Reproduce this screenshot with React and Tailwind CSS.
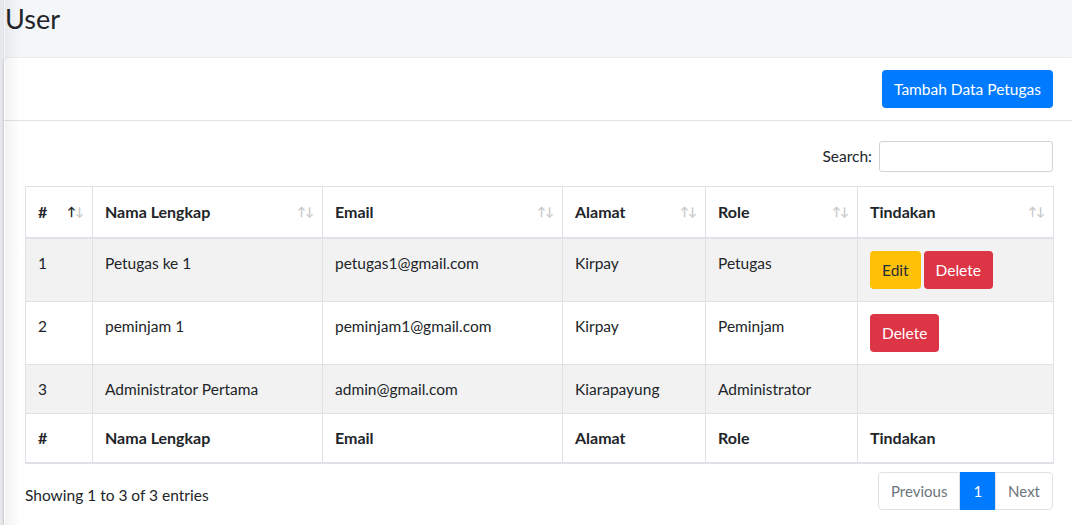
import React from 'react';

const ROWS = [
  { no: 1, nama: 'Petugas ke 1', email: 'petugas1@gmail.com', alamat: 'Kirpay', role: 'Petugas', edit: true, del: true },
  { no: 2, nama: 'peminjam 1', email: 'peminjam1@gmail.com', alamat: 'Kirpay', role: 'Peminjam', edit: false, del: true },
  { no: 3, nama: 'Administrator Pertama', email: 'admin@gmail.com', alamat: 'Kiarapayung', role: 'Administrator', edit: false, del: false },
];

const COLS = [
  { label: '#', w: 'w-[67px]' },
  { label: 'Nama Lengkap', w: 'w-[230px]' },
  { label: 'Email', w: 'w-[240px]' },
  { label: 'Alamat', w: 'w-[143px]' },
  { label: 'Role', w: 'w-[152px]' },
  { label: 'Tindakan', w: 'w-[196px]' },
];

const SortIcon = ({ active }) => (
  <span className="flex text-[12px] leading-none font-bold tracking-[-1px]">
    <span className={active ? 'text-[#212529]' : 'text-[#c8c9ca]'}>↑</span>
    <span className="text-[#c8c9ca]">↓</span>
  </span>
);

export default function App() {
  return (
    <div className="relative min-h-screen bg-[#f4f6f9] flex text-[#212529] text-[15.5px] font-['Lato','Noto_Sans',sans-serif]">
      {/* sidebar shadow edge */}
      <div className="w-[4px] bg-[#e6e8ec] border-r border-[#dfe2e6] flex-shrink-0" />
      <div className="pointer-events-none absolute left-[5px] top-0 bottom-0 w-[16px] bg-gradient-to-r from-black/[0.05] to-transparent z-10" />

      <div className="flex-1 min-w-0">
        <h1 className="text-[27px] leading-[33px] pl-[1px] pt-[2px] h-[58px]">User</h1>

        <div className="bg-white rounded-tl-[4px] shadow-[0_0_1px_rgba(0,0,0,0.125),0_1px_3px_rgba(0,0,0,0.2)]">
          {/* Card header */}
          <div className="flex justify-end items-center h-[63px] px-[19px] border-b border-[#dfe2e6]">
            <button className="bg-[#007bff] text-white leading-[24px] px-[12px] py-[7px] rounded-[4px]">
              Tambah Data Petugas
            </button>
          </div>

          {/* Card body */}
          <div className="pl-[21px] pr-[19px] pt-[20px] pb-[15px]">
            <div className="flex justify-end items-center gap-[7px]">
              <span>Search:</span>
              <input className="w-[174px] h-[31px] border border-[#ced4da] rounded-[3px] px-2 text-sm" />
            </div>

            <table className="mt-[14px] w-[1027px] border-collapse leading-[24px] table-fixed">
              <thead>
                <tr>
                  {COLS.map((c, i) => (
                    <th key={c.label} className={`${c.w} border border-[#dee2e6] border-b-2 text-left font-bold text-[16px] pl-[12px] pr-[9px] py-[13px]`}>
                      <div className="flex items-center justify-between">
                        <span>{c.label}</span>
                        <SortIcon active={i === 0} />
                      </div>
                    </th>
                  ))}
                </tr>
              </thead>
              <tbody>
                {ROWS.map((r, i) => (
                  <tr key={r.no} className={i % 2 === 0 ? 'bg-[#f2f2f2]' : 'bg-white'}>
                    <td className="border border-[#dee2e6] px-[12px] py-[12px] align-top">{r.no}</td>
                    <td className="border border-[#dee2e6] px-[12px] py-[12px] align-top">{r.nama}</td>
                    <td className="border border-[#dee2e6] px-[12px] py-[12px] align-top">{r.email}</td>
                    <td className="border border-[#dee2e6] px-[12px] py-[12px] align-top">{r.alamat}</td>
                    <td className="border border-[#dee2e6] px-[12px] py-[12px] align-top">{r.role}</td>
                    <td className="border border-[#dee2e6] px-[12px] py-[12px] align-top">
                      {(r.edit || r.del) && (
                        <div className="flex gap-[3px]">
                          {r.edit && (
                            <button className="bg-[#ffc107] text-[#1f2d3d] px-[12px] py-[7px] rounded-[4px] leading-[24px]">Edit</button>
                          )}
                          {r.del && (
                            <button className="bg-[#dc3545] text-white px-[12px] py-[7px] rounded-[4px] leading-[24px]">Delete</button>
                          )}
                        </div>
                      )}
                    </td>
                  </tr>
                ))}
              </tbody>
              <tfoot>
                <tr>
                  {COLS.map((c) => (
                    <th key={c.label} className="border border-[#dee2e6] border-b-2 text-left font-bold text-[16px] px-[12px] py-[12px]">
                      {c.label}
                    </th>
                  ))}
                </tr>
              </tfoot>
            </table>

            <div className="flex justify-between items-start mt-[8px]">
              <div className="pt-[12px]">Showing 1 to 3 of 3 entries</div>
              <div className="flex leading-[24px] text-[15px]">
                <span className="px-[12px] py-[6px] border border-[#dee2e6] rounded-l-[4px] text-[#6c757d]">Previous</span>
                <span className="px-[12px] py-[6px] border border-[#007bff] bg-[#007bff] text-white">1</span>
                <span className="px-[12px] py-[6px] border border-[#dee2e6] rounded-r-[4px] text-[#6c757d]">Next</span>
              </div>
            </div>
          </div>
        </div>
      </div>
    </div>
  );
}
